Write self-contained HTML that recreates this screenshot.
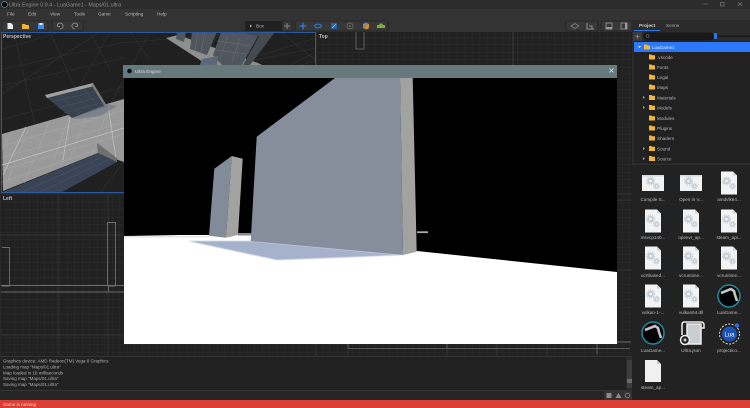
<!DOCTYPE html>
<html><head><meta charset="utf-8"><style>
html,body{margin:0;padding:0;background:#2b2b2b;width:750px;height:408px;overflow:hidden}
svg{display:block;filter:blur(.3px)}
text{font-family:"Liberation Sans",sans-serif;font-size:4.6px;fill:#b4b4b4}
.f{fill:#bdbdbd;font-size:4.6px;text-anchor:middle}
.c{font-size:4.5px;fill:#b0b0b0}
.m{font-size:4.7px;fill:#bdbdbd}
.v{font-size:5px;font-weight:bold;fill:#bdbdbd}
</style></head><body>
<svg width="750" height="408" viewBox="0 0 750 408" xmlns="http://www.w3.org/2000/svg">
<defs>
<pattern id="g" width="7.5" height="7.5" patternUnits="userSpaceOnUse"><rect width="7.5" height="7.5" fill="#212121"/><path d="M7.5 0V7.5M0 7.5H7.5" stroke="#2d2d2d" stroke-width=".7"/></pattern>
<g id="gears"><circle cx="-2.5" cy="-2" r="3.3" fill="#c4ccd3"/><circle cx="-2.5" cy="-2" r="4.1" fill="none" stroke="#c4ccd3" stroke-width="1" stroke-dasharray="1.300 1"/><circle cx="-2.500" cy="-2" r="1.400" fill="#f1f3f5"/><circle cx="3.500" cy="3.200" r="2.300" fill="#c4ccd3"/><circle cx="3.500" cy="3.200" r="2.900" fill="none" stroke="#c4ccd3" stroke-width=".8" stroke-dasharray="1 .8"/><circle cx="3.500" cy="3.200" r=".9" fill="#f1f3f5"/></g>
<g id="file"><path d="M-8-11.500H4L8-7.500V11.500H-8Z" fill="#f1f3f5"/><path d="M4-11.500V-7.500H8Z" fill="#cfd3d7"/><use href="#gears"/></g>
<g id="wide"><rect x="-11" y="-8" width="22" height="16" fill="#f1f3f5"/><rect x="-11" y="-8" width="22" height="1.500" fill="#d5d9dd"/><use href="#gears"/></g>
<g id="lg"><circle r="11" fill="#000" stroke="#1f8ea3" stroke-width="1.500"/><path d="M-8-3L-3-5L2-7L5-5L6-1L8 5" fill="none" stroke="#c4c4c4" stroke-width="2.600"/></g>
<g id="fold"><path d="M0 0H2.500L3.200 .8H6V5H0Z" fill="#f2b632"/></g>
</defs>

<rect width="750" height="408" fill="#2b2b2b"/>
<rect y="9" width="750" height="23" fill="#333"/>
<rect width="750" height="9" fill="#2c2c2c"/>
<circle cx="4.500" cy="4.500" r="3" fill="#0a0a0a" stroke="#4d90a5" stroke-width=".7"/>
<text x="9" y="6.300" style="fill:#8f8f8f;font-size:5.400px">Ultra Engine 0.9.4 - LuaGame1 - Maps/01.ultra</text>
<path d="M703 4H708" stroke="#666" stroke-width=".8"/><rect x="720.500" y="2.500" width="3.500" height="3.500" fill="none" stroke="#777" stroke-width=".7"/><path d="M738 2.500L742 6M742 2.500L738 6" stroke="#777" stroke-width=".8"/>
<text class="m" x="7" y="15.700">File</text><text class="m" x="28" y="15.700">Edit</text><text class="m" x="50" y="15.700">View</text><text class="m" x="74" y="15.700">Tools</text><text class="m" x="98" y="15.700">Game</text><text class="m" x="125" y="15.700">Scripting</text><text class="m" x="157" y="15.700">Help</text>

<!-- toolbar -->
<g fill="#373737" stroke="#242424" stroke-width=".8"><rect x="2" y="21" width="46" height="10" rx="1"/><rect x="52" y="21" width="31" height="10" rx="1"/><rect x="282" y="21" width="10" height="10"/><rect x="295" y="21" width="93" height="10" rx="1"/><rect x="566" y="21" width="32" height="10" rx="1"/><rect x="601" y="21" width="31" height="10" rx="1"/></g>
<rect x="245" y="21" width="37" height="10" fill="#212121"/>
<path d="M7.500 23H11L13 25V29H7.500Z" fill="#eee"/><path d="M22 24H25L26 25H29V29H22Z" fill="#f0b332"/><rect x="38" y="23" width="6" height="6" fill="#3f8cf0"/><rect x="39.500" y="23" width="3" height="2" fill="#dfe9f5"/>
<path d="M57.500 24.500A3 3 0 1 1 60 29M57.500 24V26.500H60" fill="none" stroke="#999" stroke-width=".8"/><path d="M77.500 24.500A3 3 0 1 0 75 29M77.500 24V26.500H75" fill="none" stroke="#999" stroke-width=".8"/>
<path d="M250 24.500L252 26L250 27.500Z" fill="#aaa"/><text x="256" y="27.500">Box</text><path d="M284 26H290M287 23V29" stroke="#999" stroke-width=".8"/>
<path d="M303 22.500V29.500M299.500 26H306.500" stroke="#2b78cf" stroke-width="1.300"/><circle cx="303" cy="26" r="1.300" fill="#2b78cf"/>
<ellipse cx="318" cy="26" rx="3.500" ry="1.800" fill="none" stroke="#2b78cf" stroke-width="1.200"/>
<rect x="331" y="23" width="6" height="6" fill="#2560a8"/><path d="M332 28L336 24" stroke="#9cc3ef" stroke-width=".8"/>
<circle cx="350" cy="26" r="3" fill="none" stroke="#6a665a" stroke-width=".9"/><circle cx="350" cy="26" r="1" fill="#6a665a"/>
<path d="M363 24L366 22.500L369 24V28L366 29.500L363 28Z" fill="#8a8a8a"/><path d="M366 26L369 24V28L366 29.500Z" fill="#e88a1c"/>
<path d="M377 25H379L380 23.500H382L383 25H385V28H377Z" fill="#7eaa3a"/>
<path d="M571 26L575 23.500L579 26L575 28.500Z" fill="none" stroke="#808080" stroke-width=".8"/><path d="M587 23V29H594M589 26H592V29" fill="none" stroke="#8f8f8f" stroke-width="1"/>
<rect x="606" y="23" width="6" height="6" fill="none" stroke="#999" stroke-width=".8"/><rect x="606" y="27" width="6" height="2" fill="#999"/><rect x="621" y="23" width="6" height="6" fill="none" stroke="#999" stroke-width=".8"/><rect x="625" y="23" width="2" height="6" fill="#999"/>

<!-- Viewports -->
<rect x="0" y="32" width="632" height="325" fill="#2a2a2a"/>
<rect x="1" y="32" width="315" height="161" fill="#202020"/>
<g stroke="#333" stroke-width=".6" fill="none">
<path d="M0 70L120 43L250 32M0 86L124 58M0 50L60 32M0 120L150 80L316 48M0 145L150 110M0 95L100 32M20 192L110 32M62 192L150 32M100 192L190 80L220 32M140 120L316 60M230 65L316 38M290 65L316 52"/>
<path d="M14 32L50 192M50 32L85 110M90 32L110 70M130 32L150 60M280 32L316 60"/>
</g>
<!-- floor -->
<path d="M2 134L124 99V162L98 153L3 191Z" fill="#9a9a9a"/>
<g stroke="#aeaeae" stroke-width=".4" fill="none"><path d="M2 146L124 110M2 158L124 122M2 170L124 134M2 182L96 150M12 131L2 150M30 126L8 180M50 120L24 184M70 114L50 170M90 108L66 168M110 103L90 160"/></g>
<g stroke="#c4c4c4" stroke-width=".7" fill="none"><path d="M26 127L3 175M70 117L63 160M108 106L116 158M2 165L124 128"/></g>
<!-- lower wall -->
<path d="M3 192L98 153L117 162L62 192Z" fill="#3a4456"/>
<path d="M97 143L117 158V162L98 153Z" fill="#6f6f6f"/>
<g stroke="#515c6e" stroke-width=".4"><path d="M22 192L100 158M40 192L108 160"/></g>
<!-- upper wall -->
<path d="M46 97L93 85L107 106L72 118Z" fill="#38424f"/>
<path d="M45 95L93 83L94 86L47 98Z" fill="#a0a0a0"/><path d="M93 83L107 106L105 107L92 86Z" fill="#7c7c7c"/>
<path d="M72 118L107 104L117 106L100 116L78 119Z" fill="#6f7686" opacity=".7"/>
<g stroke="#4e596a" stroke-width=".4"><path d="M52 102L97 91M58 108L101 97M64 113L104 102M60 95L82 116M72 92L92 110M84 89L100 108"/></g>
<!-- far scene -->
<path d="M166 38L178 35L258 63L262 65H205L200 60Z" fill="#8e8e8e"/>
<path d="M177 32H186L184 42L176 39Z" fill="#50585f"/>
<path d="M192 32H217L207 55L190 49Z" fill="#4f555c"/>
<path d="M221 32H240L258 36L242 65H222L213 55Z" fill="#50565d"/>
<path d="M240 32H275L250 65H243L259 36Z" fill="#444a50"/>
<path d="M202 59L218 56L217 65H200Z" fill="#5c6878"/>
<g stroke="#72797e" stroke-width=".4"><path d="M198 32L195 50M205 32L201 52M228 36L220 58M240 38L232 62M218 41L250 46M214 50L246 54"/></g>
<!-- blue border -->
<rect x="1.500" y="32.500" width="314" height="160" fill="none" stroke="#2c5aa0" stroke-width="1"/>
<text class="v" x="3" y="38">Perspective</text>
<!-- Top -->
<rect x="317" y="32" width="315" height="161" fill="url(#g)"/>
<path d="M513 32V66" stroke="#444" stroke-width=".8"/>
<path d="M356 32V49H364V32" fill="none" stroke="#6f6f6f" stroke-width=".8"/>
<text class="v" x="319" y="38">Top</text>
<!-- Left -->
<rect x="1" y="194" width="315" height="162" fill="url(#g)"/>
<path d="M1 235H124M1 335H124M58 194V356M108 194V356" stroke="#3d3d3d" stroke-width=".7"/>
<path d="M1 285.500H124M1 292H124" stroke="#6a6a6a" stroke-width=".9"/>
<path d="M2 247.500H9.500V286H2M107.500 286V222.500H115.500V286H107.500M108.500 286V292" fill="none" stroke="#6f6f6f" stroke-width=".9"/>
<rect x="2" y="285" width="7" height="1.500" fill="#777"/>
<text class="v" x="3" y="200">Left</text>
<!-- lower right grid -->
<rect x="317" y="194" width="315" height="162" fill="url(#g)"/>
<path d="M316 194V356M0 193.500H632" stroke="#2f2f2f" stroke-width="1"/>
<path d="M348 344V356M447 344V356M497 344V356M547 344V356M597 344V356" stroke="#3f3f3f" stroke-width=".7"/>
<path d="M348 348.500H630M348 344V348.500M447 344V348.500M597 344V354" stroke="#6a6a6a" stroke-width=".8"/>
<path d="M617 342H631" stroke="#777" stroke-width=".9"/>
<path d="M617 200H632M617 270H632" stroke="#3a3a3a" stroke-width=".7"/>

<!-- Game window -->
<rect x="123" y="65" width="494" height="13" fill="#67797d"/>
<rect x="124" y="78" width="493" height="266" fill="#000"/>
<circle cx="129.500" cy="71" r="2.600" fill="#0a0a0a" stroke="#3d8fa8" stroke-width=".6"/>
<text x="135" y="73" style="font-size:4.700px;fill:#d5dddd">Ultra Engine</text>
<path d="M609.500 68.500L613.500 72.500M613.500 68.500L609.500 72.500" stroke="#e2e8e8" stroke-width=".8"/>
<!-- 3D -->
<path d="M124 236L180 235L251 235L251 241L417 251L617 272V344H124Z" fill="#fff"/>
<path d="M124 236H209V237.500H124Z" fill="#e4e4e4"/>
<path d="M238 233H251V235.500H238Z" fill="#8a8a8a"/>
<path d="M188 241L251 241L403 255L277 260Z" fill="#a6b1cb" style="filter:blur(.6px)"/>
<path d="M231.700 156L214.300 168.700L209 235.700L226 237.700Z" fill="#818c98"/>
<path d="M231.700 156L242.700 158.700L238 235L226 237.700Z" fill="#a2a2a0"/>
<path d="M335 78L256.700 136.700L250.700 241L403 255L400 78Z" fill="#858e9a"/>
<path d="M400 78L412.700 78L416.700 251.700L403 255Z" fill="#a2a2a0"/>
<rect x="417" y="231.300" width="11" height="1.800" fill="#aaa"/>

<!-- Console -->
<rect x="0" y="356" width="632" height="34" fill="#212121"/>
<rect x="0" y="356" width="632" height=".8" fill="#383838"/>
<rect x="626" y="357" width="6" height="33" fill="#2b2b2b"/>
<rect x="627" y="360" width="5" height="28" fill="#3d3d3d"/><rect x="627" y="379" width="5" height="4" fill="#6a6a6a"/>
<text class="c" x="3" y="362.500">Graphics device: AMD Radeon(TM) Vega 8 Graphics</text>
<text class="c" x="3" y="368.500">Loading map "Maps/01.ultra"</text>
<text class="c" x="3" y="374.500">Map loaded in 18 milliseconds</text>
<text class="c" x="3" y="380">Saving map "Maps/01.ultra"</text>
<text class="c" x="3" y="386">Saving map "Maps/01.ultra"</text>
<rect x="0" y="391" width="632" height="9" fill="#262626"/>
<rect x="0" y="390" width="632" height="1" fill="#343434"/>
<rect x="604" y="391" width="28" height="9" fill="#333"/>
<rect x="606.500" y="393" width="5" height="5" fill="#8a8a8a"/><path d="M618.500 393L621.500 398H615.500Z" fill="#8a8a8a"/><circle cx="627.500" cy="395.500" r="2.300" fill="none" stroke="#8a8a8a" stroke-width=".8"/>

<!-- right panel -->
<rect x="632" y="20" width="118" height="380" fill="#2b2b2b"/>
<rect x="634" y="30" width="26" height="1" fill="#2a78f0"/>
<text x="639" y="27" style="font-size:4.800px;font-weight:bold;fill:#d0d0d0">Project</text>
<text x="666" y="27" style="font-size:4.700px;fill:#a8a8a8">Scene</text>
<rect x="633" y="32" width="9" height="9" fill="#3b3b3b"/><path d="M635.500 36.500H639.500M637.500 34.500V38.500" stroke="#999" stroke-width=".7"/>
<rect x="643" y="32.500" width="71" height="8" rx="4" fill="#191919"/><circle cx="647.500" cy="36" r="1.500" fill="none" stroke="#777" stroke-width=".6"/>
<rect x="714" y="33" width="3" height="6" rx="1" fill="#2a78f0"/><rect x="717" y="35.500" width="33" height="1.300" fill="#171717"/>
<rect x="634" y="41" width="116" height="124" fill="#212121"/>
<rect x="634" y="42" width="116" height="10" fill="#2b78fb"/>
<path d="M638 46L641 46L639.500 48Z" fill="#e0e8f8"/>
<path d="M644 44.500H647L647.800 45.500H650V49.500H644Z" fill="#f2b632"/>
<text x="652" y="49" style="fill:#e2eaff">LuaGame1</text>
<use href="#fold" x="649" y="54.500"/><text x="657" y="59">.vscode</text>
<use href="#fold" x="649" y="64.500"/><text x="657" y="69">Fonts</text>
<use href="#fold" x="649" y="74.500"/><text x="657" y="79">Legal</text>
<use href="#fold" x="649" y="84.500"/><text x="657" y="89">Maps</text>
<use href="#fold" x="649" y="95"/><text x="657" y="99.500">Materials</text>
<use href="#fold" x="649" y="105"/><text x="657" y="109.500">Models</text>
<use href="#fold" x="649" y="115.500"/><text x="657" y="120">Modules</text>
<use href="#fold" x="649" y="125.500"/><text x="657" y="130">Plugins</text>
<use href="#fold" x="649" y="135.500"/><text x="657" y="140">Shaders</text>
<use href="#fold" x="649" y="146"/><text x="657" y="150.500">Sound</text>
<use href="#fold" x="649" y="156"/><text x="657" y="160.500">Source</text>
<path d="M643 96L645 97.500L643 99ZM643 106L645 107.500L643 109ZM643 147L645 148.500L643 150ZM643 157L645 158.500L643 160Z" fill="#999"/>
<rect x="632" y="165" width="118" height="235" fill="#222"/>
<rect x="632" y="163.500" width="118" height="1.500" fill="#2f2f2f"/>
<use href="#wide" x="653" y="183"/><use href="#wide" x="691" y="183"/><use href="#file" x="729" y="183"/>
<text class="f" x="653" y="201">Compile S...</text><text class="f" x="691" y="201">Open in V...</text><text class="f" x="729" y="201">amdvlk64...</text>
<use href="#file" x="653" y="221"/><use href="#file" x="691" y="221"/><use href="#file" x="729" y="221"/>
<text class="f" x="653" y="239">msvcp140...</text><text class="f" x="691" y="239">openvr_ap...</text><text class="f" x="729" y="239">steam_api...</text>
<use href="#file" x="653" y="258"/><use href="#file" x="691" y="258"/><use href="#file" x="729" y="258"/>
<text class="f" x="653" y="277">ucrtbased...</text><text class="f" x="691" y="277">vcruntime...</text><text class="f" x="729" y="277">vcruntime...</text>
<use href="#file" x="653" y="296"/><use href="#file" x="691" y="296"/><use href="#lg" x="729" y="296"/>
<text class="f" x="653" y="314">vulkan-1-...</text><text class="f" x="691" y="314">vulkan64.dll</text><text class="f" x="729" y="314">LuaGame...</text>
<use href="#lg" x="653" y="333"/>
<path d="M687 324H701V344H687Z" fill="#c9ced2" stroke="#eee" stroke-width="1.500"/><path d="M684 322H701Q704 322 704 325V328H701" fill="none" stroke="#eee" stroke-width="1.500"/><path d="M684 322Q682 322 682 325V335" fill="none" stroke="#eee" stroke-width="1.500"/><circle cx="685" cy="340" r="4.500" fill="#222" stroke="#eee" stroke-width="1.500"/><circle cx="685" cy="340" r="1.500" fill="#ccc"/>
<circle cx="729.500" cy="334" r="7.500" fill="#1a52b8"/><circle cx="729.500" cy="334" r="10" fill="none" stroke="#ddd" stroke-width="1" stroke-dasharray="2 1.500"/><circle cx="737" cy="325.500" r="2.200" fill="#2a6fe0"/>
<text x="729.500" y="336.500" style="font-size:6px;fill:#fff;text-anchor:middle">Lua</text>
<text class="f" x="653" y="352">LuaGame...</text><text class="f" x="691" y="352">Ultra.json</text><text class="f" x="729" y="352">projectico...</text>
<path d="M645 360H657L661 364V382H645Z" fill="#f0f0f0"/><path d="M657 360V364H661Z" fill="#ccc"/>
<text class="f" x="653" y="389">steam_ap...</text>

<!-- status -->
<rect x="0" y="400" width="750" height="8" fill="#d93f36"/>
<text class="c" x="3" y="406" style="fill:#f2cfcb">Game is running</text>
</svg>
</body></html>
